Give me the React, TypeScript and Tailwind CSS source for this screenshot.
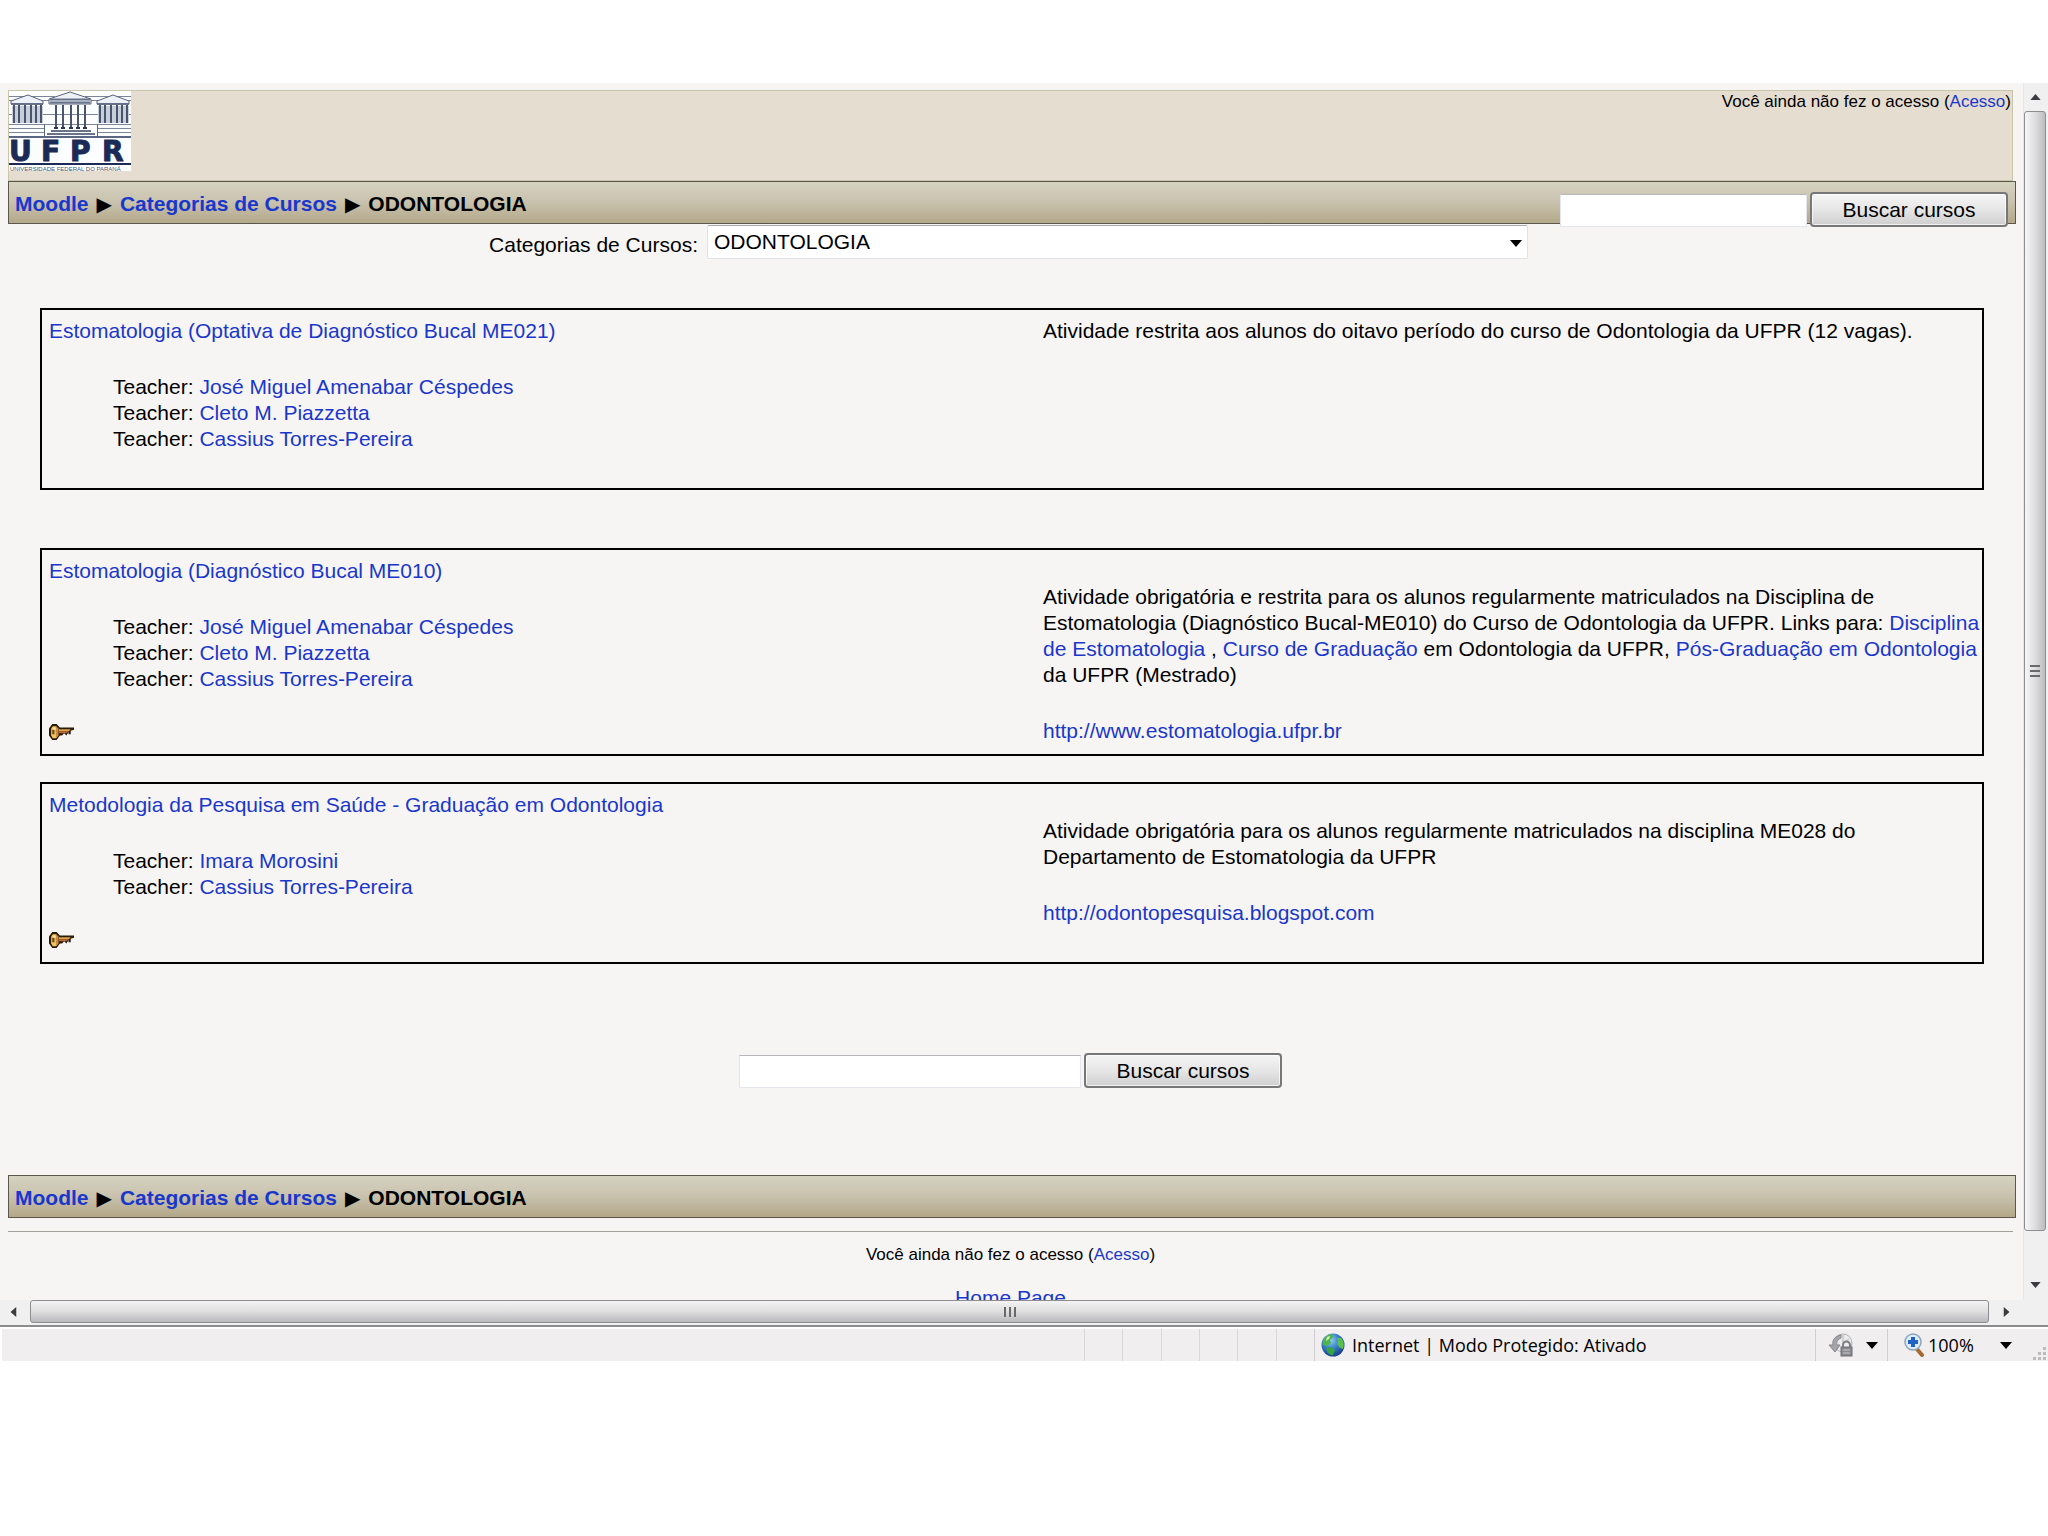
import { Fragment } from "react";
import type { ReactNode } from "react";

type Course = {
  title: string;
  teachers: string[];
  locked: boolean;
  summary: ReactNode;
};

function A({ children }: { children: ReactNode }) {
  return (
    <a href="#" className="text-[#1a37cb] hover:underline">
      {children}
    </a>
  );
}

const COURSES: Course[] = [
  {
    title: "Estomatologia (Optativa de Diagnóstico Bucal ME021)",
    teachers: [
      "José Miguel Amenabar Céspedes",
      "Cleto M. Piazzetta",
      "Cassius Torres-Pereira",
    ],
    locked: false,
    summary: (
      <p>
        Atividade restrita aos alunos do oitavo período do curso de Odontologia
        da UFPR (12 vagas).
      </p>
    ),
  },
  {
    title: "Estomatologia (Diagnóstico Bucal ME010)",
    teachers: [
      "José Miguel Amenabar Céspedes",
      "Cleto M. Piazzetta",
      "Cassius Torres-Pereira",
    ],
    locked: true,
    summary: (
      <>
        <p className="mt-[26px]">
          Atividade obrigatória e restrita para os alunos regularmente
          matriculados na Disciplina de Estomatologia (Diagnóstico Bucal-ME010)
          do Curso de Odontologia da UFPR. Links para:{" "}
          <A>Disciplina de Estomatologia</A> , <A>Curso de Graduação</A> em
          Odontologia da UFPR, <A>Pós-Graduação em Odontologia</A> da UFPR
          (Mestrado)
        </p>
        <p className="mt-[30px]">
          <A>http://www.estomatologia.ufpr.br</A>
        </p>
      </>
    ),
  },
  {
    title: "Metodologia da Pesquisa em Saúde - Graduação em Odontologia",
    teachers: ["Imara Morosini", "Cassius Torres-Pereira"],
    locked: true,
    summary: (
      <>
        <p className="mt-[26px]">
          Atividade obrigatória para os alunos regularmente matriculados na
          disciplina ME028 do Departamento de Estomatologia da UFPR
        </p>
        <p className="mt-[30px]">
          <A>http://odontopesquisa.blogspot.com</A>
        </p>
      </>
    ),
  },
];

function Logo() {
  return (
    <svg
      viewBox="0 0 122 80"
      className="h-20 w-[122px]"
      role="img"
      aria-label="UFPR"
    >
      <rect width="122" height="80" fill="#fbfdff" />
      <path
        d="M0 5.5H46M76 5.5H122M0 9.5H40M82 9.5H122M0 23.5H122M0 33.5H122M0 37.5H35M88 37.5H122M0 41.5H35M88 41.5H122"
        stroke="#7d8698"
      />
      {/* pediments */}
      <g fill="#eef2f8" stroke="#5b667d">
        <path d="M2 10L19 4L34 10V13H2Z" />
        <path d="M88 10L104 4L120 10V13H88Z" />
        <path d="M40 8L61 1L82 8V13H40Z" />
      </g>
      <path
        d="M41 8.5H81M41 11.5H81M2 13H34M88 13H120"
        stroke="#65708a"
        strokeWidth="2"
      />
      {/* side wings */}
      <rect x="3" y="15" width="31" height="17" fill="#c6cfda" />
      <rect x="89" y="15" width="31" height="17" fill="#c6cfda" />
      {[4, 9, 15, 21, 26, 31].map((x) => (
        <g key={x} fill="#4a556d">
          <rect x={x} y="14" width="2" height="18" />
          <rect x={x + 86} y="14" width="2" height="18" />
        </g>
      ))}
      {/* main columns */}
      {[46, 53, 61, 68, 75].map((x) => (
        <g key={x} fill="#4a556d">
          <rect x={x} y="14" width="2" height="23" />
          <rect x={x - 1} y="36" width="4" height="2" fill="#2b3550" />
        </g>
      ))}
      <path d="M42 40H82M38 43H86" stroke="#6a7387" strokeWidth="2" />
      <path d="M35.5 33V45M88.5 33V45" stroke="#5b667d" />
      <rect y="45" width="122" height="2" fill="#5a6784" />
      <g
        fontFamily="'DejaVu Sans', sans-serif"
        fontSize="28"
        fontWeight="700"
        fill="#1b2b55"
        stroke="#1b2b55"
      >
        <text x="0" y="70">U</text>
        <text x="32" y="70">F</text>
        <text x="61" y="70">P</text>
        <text x="93" y="70">R</text>
      </g>
      <rect y="72" width="122" height="2" fill="#1b2b55" />
      <text
        x="1"
        y="80"
        fontFamily="'Liberation Sans', sans-serif"
        fontSize="6"
        fill="#4a556d"
      >
        UNIVERSIDADE FEDERAL DO PARANÁ
      </text>
    </svg>
  );
}

function KeyIcon() {
  return (
    <svg
      viewBox="1 1 23 14"
      preserveAspectRatio="none"
      className="h-4 w-[25px]"
      aria-hidden="true"
    >
      <path
        d="M4 1H8L11 4H24V6L21 7V10H19V8L17 11L15 9L13 11H11L8 15H4L1 11V5Z"
        fill="#2a1a0c"
      />
      <path d="M4.500 3H7.500L9.500 5V11L7.500 13.500H4.500L3 11V5Z" fill="#f0c45c" />
      <path d="M7 3L9.500 5V11L7.500 13.500Z" fill="#d08a3a" />
      <path d="M10 5.500H21L19 7.500H10Z" fill="#e0a04a" />
      <path d="M10 7.500H18V8.500L16 9H10Z" fill="#b8683a" />
      <rect x="4" y="6" width="2" height="4" fill="#6b4a1c" />
      <rect x="5" y="4" width="2" height="2" fill="#fdeeb4" />
    </svg>
  );
}

function Caret({ className }: { className: string }) {
  return (
    <svg viewBox="0 0 12 7" className={className} aria-hidden="true">
      <path d="M0 0H12L6 7Z" fill="currentColor" />
    </svg>
  );
}

function Separator() {
  return (
    <li
      aria-hidden="true"
      className="font-['DejaVu_Sans',sans-serif] text-[20px] font-normal"
    >
      ▶
    </li>
  );
}

function Breadcrumb() {
  return (
    <ol className="flex h-full items-center gap-2 pl-1.5 pt-0.5 text-[21px] leading-[26px] font-bold">
      <li>
        <A>Moodle</A>
      </li>
      <Separator />
      <li>
        <A>Categorias de Cursos</A>
      </li>
      <Separator />
      <li>ODONTOLOGIA</li>
    </ol>
  );
}

const BAR =
  "flex h-[43px] items-start justify-between border border-[#5c574c] bg-linear-to-b from-[#d6d3c1] via-[#c8c1ad] to-[#b3a888]";

function SearchForm({ id, inputClass }: { id: string; inputClass: string }) {
  return (
    <form className="flex items-end gap-[3px]" onSubmit={(e) => e.preventDefault()}>
      <input
        id={id}
        type="text"
        aria-label="Buscar cursos"
        className={`h-[33px] border border-[#e3e6ec] border-t-[#b4b6ba] bg-white px-1 outline-none ${inputClass}`}
      />
      <button
        type="submit"
        className="h-[35px] w-[198px] rounded-[4px] border-2 border-[#77777a] bg-linear-to-b from-[#f5f5f5] from-0% via-[#e6e6e6] via-50% to-[#cfcfcf] text-[21px] leading-[26px] inset-ring inset-ring-white/70"
      >
        Buscar cursos
      </button>
    </form>
  );
}

function LoginInfo() {
  return (
    <p className="text-[17px] leading-[20px]">
      Você ainda não fez o acesso (<A>Acesso</A>)
    </p>
  );
}

function CourseBox({ course }: { course: Course }) {
  return (
    <section className="flex border-2 border-black pt-2 pb-1.5 pl-[7px]">
      <div className="flex-1">
        <h3>
          <A>{course.title}</A>
        </h3>
        <ul className="my-[30px] pl-16">
          {course.teachers.map((name) => (
            <li key={name}>
              Teacher: <A>{name}</A>
            </li>
          ))}
        </ul>
        {course.locked && (
          <div className="h-[26px] pt-0.5">
            <KeyIcon />
          </div>
        )}
      </div>
      <div className="w-[939px]">{course.summary}</div>
    </section>
  );
}

function VerticalScrollbar() {
  return (
    <div className="flex w-[25px] flex-col border-l border-[#e6e6e8] bg-[#f1f0f1] pr-0.5 text-[#3c3c40]">
      <div className="flex h-7 items-center justify-center">
        <Caret className="h-1.5 w-[11px] rotate-180" />
      </div>
      <div className="flex flex-1 items-center justify-center rounded-[3px] border border-[#8e8e92] bg-linear-to-r from-[#f6f6f6] via-[#dededf] to-[#bcbcbf]">
        <div className="flex w-2.5 flex-col gap-[3px]">
          <span className="h-0.5 bg-[#6a6a6e]" />
          <span className="h-0.5 bg-[#6a6a6e]" />
          <span className="h-0.5 bg-[#6a6a6e]" />
        </div>
      </div>
      <div className="flex h-[69px] items-end justify-center pb-3">
        <Caret className="h-1.5 w-[11px]" />
      </div>
    </div>
  );
}

function HorizontalScrollbar() {
  return (
    <div className="flex h-[27px] border-b-2 border-[#8c8c8e] bg-[#f1f0f1] pb-0.5 text-[#3c3c40]">
      <div className="flex w-[30px] items-center justify-center pr-1">
        <Caret className="h-1.5 w-[11px] rotate-90" />
      </div>
      <div className="flex flex-1 items-center justify-center rounded-[3px] border border-[#8e8e92] bg-linear-to-b from-[#f4f4f4] via-[#dededf] to-[#b9b9bc]">
        <div className="flex h-2.5 gap-[3px]">
          <span className="w-0.5 bg-[#6a6a6e]" />
          <span className="w-0.5 bg-[#6a6a6e]" />
          <span className="w-0.5 bg-[#6a6a6e]" />
        </div>
      </div>
      <div className="flex w-[34px] items-center justify-center">
        <Caret className="h-1.5 w-[11px] -rotate-90" />
      </div>
      <div className="w-[25px]" />
    </div>
  );
}

function GlobeIcon() {
  return (
    <svg viewBox="0 0 24 24" className="size-6" aria-hidden="true">
      <defs>
        <radialGradient id="sea" cx="40%" cy="30%" r="70%">
          <stop offset="0" stopColor="#8fd0f4" />
          <stop offset="0.5" stopColor="#3a80cc" />
          <stop offset="1" stopColor="#1b3f8c" />
        </radialGradient>
      </defs>
      <circle cx="12" cy="12" r="11.500" fill="url(#sea)" />
      <path d="M3 6C5 3 8 1 11 1L12 4L9 7L10 10L6 13L2 12C1 10 2 8 3 6Z" fill="#4fb548" />
      <path d="M16 5L20 5C23 8 23.500 12 22 16L19 15L16 11L17 8Z" fill="#58c04c" />
      <path d="M5 15L10 14L14 17L12 22C9 22.500 6 20 5 15Z" fill="#35a544" />
      <path d="M6 4L9 3L8 6L5 8Z" fill="#d8f7b8" />
    </svg>
  );
}

function ProtectedIcon() {
  return (
    <svg viewBox="0 0 26 24" className="h-6 w-[26px]" aria-hidden="true">
      <circle cx="15" cy="10" r="9" fill="#ececee" stroke="#b2b2b6" />
      <path d="M15 2V10L21 6" fill="none" stroke="#c4c4c8" strokeWidth="1.500" />
      <path d="M13 2C7 3 4 7 5 12L1 12L7 19L12 12H9C8 9 10 6 13 5Z" fill="#a6a6aa" stroke="#85858a" />
      <path d="M15 15V12A3.500 3.500 0 0 1 22 12V15" fill="none" stroke="#808084" strokeWidth="2" />
      <rect x="13" y="14" width="11" height="9" fill="#8a8a8e" stroke="#6f6f73" />
      <path d="M15 17H22M15 20H22" stroke="#c9c9cc" />
    </svg>
  );
}

function ZoomIcon() {
  return (
    <svg viewBox="0 0 20 24" className="h-6 w-5" aria-hidden="true">
      <path d="M12 15L18 22" stroke="#a8692f" strokeWidth="4" strokeLinecap="round" />
      <circle cx="9" cy="9" r="8" fill="#dcebfa" stroke="#8fa3bb" strokeWidth="1.500" />
      <path d="M9 4V14M4 9H14" stroke="#1f62c4" strokeWidth="4" />
    </svg>
  );
}

function StatusBar() {
  return (
    <footer className="mt-0.5 ml-0.5 flex h-8 bg-[#f0eeef] font-['Open_Sans','Noto_Sans',sans-serif] text-[18px] leading-6">
      <div className="flex-1" />
      <div className="grid w-[230px] grid-cols-6">
        {Array.from({ length: 6 }, (_, i) => (
          <div key={i} className="border-l border-[#d8d6d8]" />
        ))}
      </div>
      <div className="flex w-[501px] items-center gap-[7px] border-l border-[#d0ced0] pl-1.5">
        <GlobeIcon />
        <span>Internet | Modo Protegido: Ativado</span>
      </div>
      <div className="flex w-[72px] items-center gap-3 border-l border-[#d0ced0] pl-3">
        <ProtectedIcon />
        <Caret className="h-[7px] w-3" />
      </div>
      <div className="flex w-[161px] items-center border-l border-[#d0ced0] pl-4">
        <ZoomIcon />
        <span className="ml-1 w-[72px]">100%</span>
        <Caret className="h-[7px] w-3" />
        <svg viewBox="0 0 15 15" className="ml-auto size-[15px] self-end" aria-hidden="true">
          <path
            d="M10 1h3v3h-3zM5 6h3v3h-3zM10 6h3v3h-3zM0 11h3v3h-3zM5 11h3v3h-3zM10 11h3v3h-3z"
            fill="#bdbbbd"
          />
        </svg>
      </div>
    </footer>
  );
}

export default function App() {
  return (
    <div className="min-h-screen w-full bg-white pt-[83px] font-['Liberation_Sans',Arial,sans-serif] text-[21px] leading-[26px] text-black">
      <div className="flex bg-[#f7f5f3]">
        <div className="min-w-0 flex-1 pt-[7px] pr-[7px] pl-2">
          <header className="mr-[3px] flex h-[91px] items-start justify-between border border-[#c9c5ab] bg-[#e5ddd0]">
            <Logo />
            <div className="pt-px pr-px">
              <LoginInfo />
            </div>
          </header>

          <nav className={BAR}>
            <Breadcrumb />
            <div className="pt-2.5 pr-[7px]">
              <SearchForm id="navsearch" inputClass="w-[247px]" />
            </div>
          </nav>

          <main className="pr-[3px]">
            <div className="flex items-center justify-center gap-[9px] pt-px pr-1">
              <label htmlFor="category" className="pt-1.5">
                Categorias de Cursos:
              </label>
              <div className="relative w-[821px]">
                <select
                  id="category"
                  className="block h-[34px] w-full appearance-none rounded-xs border border-[#dfe3e8] border-t-[#a9a9ac] bg-white pl-1.5"
                >
                  <option>ODONTOLOGIA</option>
                </select>
                <Caret className="pointer-events-none absolute top-[15px] right-1.5 h-[7px] w-3" />
              </div>
            </div>

            <div className="mt-[49px] mr-[29px] ml-8">
              {COURSES.map((course, i) => (
                <Fragment key={course.title}>
                  {i === 1 && <div className="h-[58px]" />}
                  {i === 2 && <div className="h-[26px]" />}
                  <CourseBox course={course} />
                </Fragment>
              ))}
            </div>

            <div className="mt-[89px] mb-[87px] flex justify-center">
              <SearchForm id="coursesearch" inputClass="w-[342px]" />
            </div>
          </main>

          <nav className={BAR}>
            <Breadcrumb />
          </nav>
          <div className="mr-[3px] text-center">
            <hr className="mt-[13px] border-[#a3a39c]" />
            <div className="mt-[13px]">
              <LoginInfo />
            </div>
            <p className="mt-5 h-[15px] overflow-hidden">
              <A>Home Page</A>
            </p>
          </div>
        </div>
        <VerticalScrollbar />
      </div>
      <HorizontalScrollbar />
      <StatusBar />
    </div>
  );
}
